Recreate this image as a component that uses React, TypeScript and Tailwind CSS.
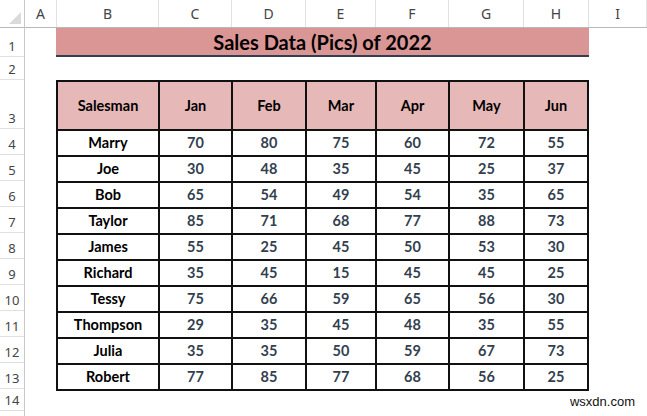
import React from "react";

const columns = ["A", "B", "C", "D", "E", "F", "G", "H", "I"];
const months = ["Jan", "Feb", "Mar", "Apr", "May", "Jun"];

const sales: { name: string; values: number[] }[] = [
  { name: "Marry", values: [70, 80, 75, 60, 72, 55] },
  { name: "Joe", values: [30, 48, 35, 45, 25, 37] },
  { name: "Bob", values: [65, 54, 49, 54, 35, 65] },
  { name: "Taylor", values: [85, 71, 68, 77, 88, 73] },
  { name: "James", values: [55, 25, 45, 50, 53, 30] },
  { name: "Richard", values: [35, 45, 15, 45, 45, 25] },
  { name: "Tessy", values: [75, 66, 59, 65, 56, 30] },
  { name: "Thompson", values: [29, 35, 45, 48, 35, 55] },
  { name: "Julia", values: [35, 35, 50, 59, 67, 73] },
  { name: "Robert", values: [77, 85, 77, 68, 56, 25] },
];

// row heights of the sheet (rows 1..14), row 15 only peeks in below
const rowHeights = ["h-[29px]", "h-[23px]", "h-[49px]", ...Array(10).fill("h-[26px]"), "h-[22px]"];

export default function App() {
  return (
    <div className="w-[647px] h-[416px] overflow-hidden bg-white flex font-['Lato',sans-serif]">
      {/* row header column */}
      <div className="w-[25px] shrink-0 flex flex-col border-r border-[#c8c8c8]">
        <div className="h-[28px] shrink-0 border-b border-[#b8b8b8] flex items-end justify-end p-[3px]">
          <div className="w-0 h-0 border-l-[12px] border-l-transparent border-b-[12px] border-b-[#dadada]" />
        </div>
        {rowHeights.map((h, i) => (
          <div
            key={i}
            className={`${h} shrink-0 border-b border-[#e1e1e1] flex items-end justify-center pb-[1px] text-[13px] leading-[18px] text-[#444] font-['Noto_Sans',sans-serif]`}
          >
            {i + 1}
          </div>
        ))}
        <div className="flex-1" />
      </div>

      {/* sheet */}
      <div className="flex-1 flex flex-col">
        <div className="h-[28px] shrink-0 grid grid-cols-[32px_102px_73px_74px_70px_73px_75px_65px_1fr] border-b border-[#b8b8b8]">
          {columns.map((c) => (
            <div
              key={c}
              className="border-r border-[#e1e1e1] flex items-center justify-center text-[14px] text-[#444] font-['Noto_Sans',sans-serif]"
            >
              {c}
            </div>
          ))}
        </div>

        <div className="grid grid-cols-[31px_533px_1fr]">
          <div />
          <div className="flex flex-col">
            {/* row 1: title */}
            <div className="h-[29px] bg-[#da9694] border-b-2 border-[#333f50] flex items-center justify-center text-[20px] font-bold text-black">
              Sales Data (Pics) of 2022
            </div>
            {/* row 2 */}
            <div className="h-[23px]" />
            {/* table */}
            <div className="grid grid-cols-[102px_73px_74px_70px_73px_75px_64px] border-l-2 border-t-2 border-[#111] text-[14.5px] font-bold">
              <div className="h-[49px] bg-[#e6b8b7] border-r-2 border-b-2 border-[#111] flex items-center justify-center">
                Salesman
              </div>
              {months.map((m) => (
                <div
                  key={m}
                  className="h-[49px] bg-[#e6b8b7] border-r-2 border-b-2 border-[#111] flex items-center justify-center"
                >
                  {m}
                </div>
              ))}
              {sales.map((row) => (
                <React.Fragment key={row.name}>
                  <div className="h-[26px] border-r-2 border-b-2 border-[#111] flex items-center justify-center text-black">
                    {row.name}
                  </div>
                  {row.values.map((v, j) => (
                    <div
                      key={j}
                      className="h-[26px] border-r-2 border-b-2 border-[#111] flex items-center justify-center text-[#333f4f]"
                    >
                      {v}
                    </div>
                  ))}
                </React.Fragment>
              ))}
            </div>
          </div>
          <div />
        </div>

        <div className="flex-1 flex items-center justify-end pr-[12px] pb-[4px] text-[13px] text-[#111] font-['Liberation_Sans',sans-serif]">
          wsxdn.com
        </div>
      </div>
    </div>
  );
}
